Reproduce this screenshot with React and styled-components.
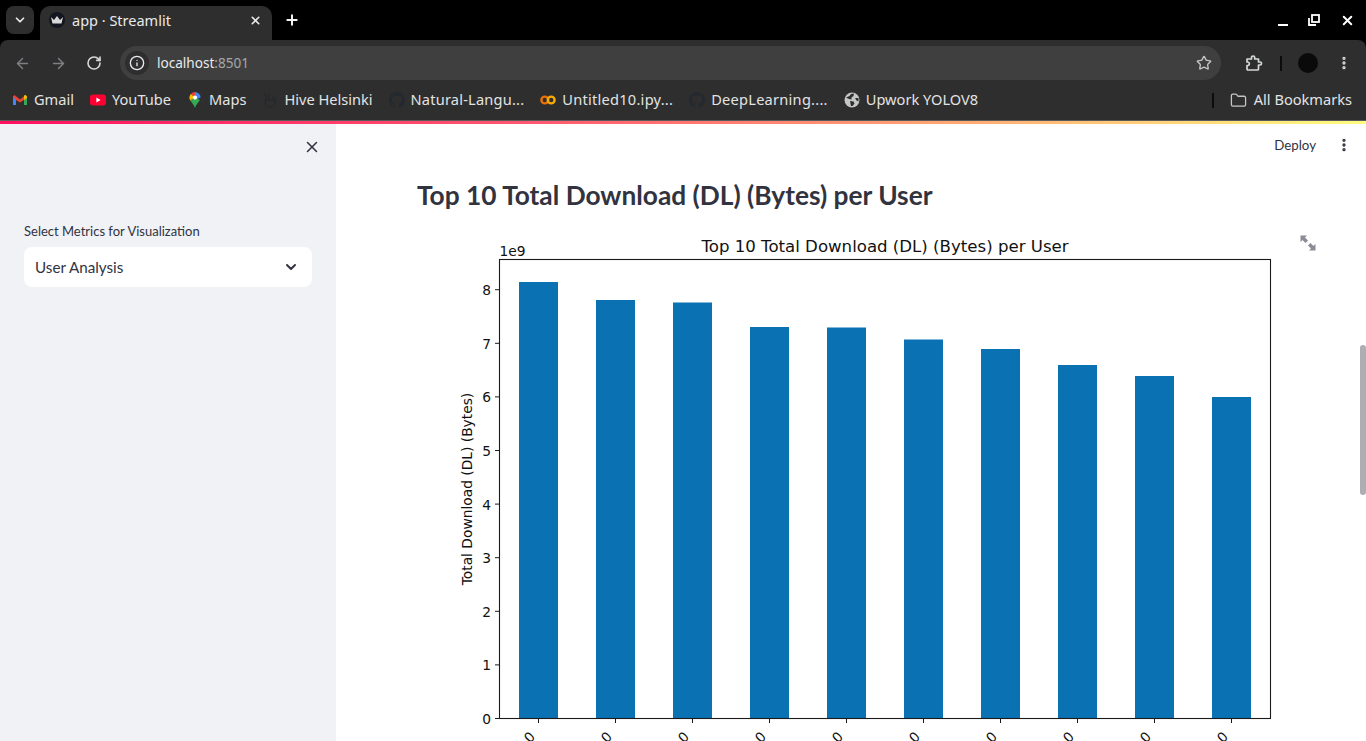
import React from "react";
import styled, { createGlobalStyle } from "styled-components";
import { ArrowLeft, ArrowRight, RotateCw, Info, Star, MoreVertical, Folder, X, Plus, ChevronDown } from "lucide-react";

const GlobalStyle = createGlobalStyle`
  html, body { margin: 0; padding: 0; height: 100%; overflow: hidden; background: #000; }
  #root { height: 741px; }
  * { box-sizing: border-box; }
`;

const bars = [
  { x: 519, top: 282 },
  { x: 596, top: 300 },
  { x: 673, top: 302.5 },
  { x: 750, top: 327 },
  { x: 827, top: 327.5 },
  { x: 904, top: 339.5 },
  { x: 981, top: 349 },
  { x: 1058, top: 365 },
  { x: 1135, top: 376 },
  { x: 1212, top: 397 },
];
const ids = ["33614892860.0", "33760536639.0", "33625779332.0", "33675877202.0", "33626320676.0", "33659725664.0", "33786323068.0", "33667163239.0", "33603127838.0", "33627080969.0"];
const yTicks = [0, 1, 2, 3, 4, 5, 6, 7, 8];

// chart svg starts at page x=417, y=232
const ox = 417;
const oy = 232;

const GmailIcon = () => (
  <svg width="16" height="16" viewBox="0 0 16 16">
    <path d="M1 4v9h3V7z" fill="#4285f4" />
    <path d="M15 4v9h-3V7z" fill="#34a853" />
    <path d="M1 4.5 L2.5 3 L8 7.5 L13.5 3 L15 4.5 L12 8 L8 10.5 L4 8z" fill="#ea4335" />
    <path d="M12 3.6 L13.5 3 L15 4.5 L15 6 L12 8z" fill="#fbbc04" />
  </svg>
);

const YoutubeIcon = () => (
  <svg width="16" height="16" viewBox="0 0 16 16">
    <rect x="0" y="2.5" width="16" height="11" rx="3" fill="#ff0033" />
    <path d="M6.4 5.6 L10.6 8 L6.4 10.4z" fill="#fff" />
  </svg>
);

const MapsIcon = () => (
  <svg width="16" height="18" viewBox="0 0 16 18">
    <path d="M8 1a5.6 5.6 0 0 1 5.6 5.6L8 9z" fill="#4285f4" />
    <path d="M8 1a5.6 5.6 0 0 0-4.2 1.9L8 6.6z" fill="#ea4335" />
    <path d="M3.8 2.9A5.6 5.6 0 0 0 2.4 6.6c0 1 .3 1.9.8 2.8L8 6.6z" fill="#fbbc04" />
    <path d="M3.2 9.4C4.6 11.6 7 13.4 8 17c1-3.6 3.6-5.6 4.9-8L8 6.6z" fill="#34a853" />
    <circle cx="8" cy="6.6" r="2.1" fill="#fff" />
  </svg>
);

const GithubMark = () => (
  <svg width="16" height="16" viewBox="0 0 16 16">
    <path
      fill="#24292f"
      d="M8 0C3.58 0 0 3.58 0 8c0 3.54 2.29 6.53 5.47 7.59.4.07.55-.17.55-.38 0-.19-.01-.82-.01-1.49-2.01.37-2.53-.49-2.69-.94-.09-.23-.48-.94-.82-1.13-.28-.15-.68-.52-.01-.53.63-.01 1.08.58 1.23.82.72 1.21 1.87.87 2.33.66.07-.52.28-.87.51-1.07-1.78-.2-3.64-.89-3.64-3.95 0-.87.31-1.59.82-2.15-.08-.2-.36-1.02.08-2.12 0 0 .67-.21 2.2.82.64-.18 1.32-.27 2-.27s1.36.09 2 .27c1.53-1.04 2.2-.82 2.2-.82.44 1.1.16 1.92.08 2.12.51.56.82 1.27.82 2.15 0 3.07-1.87 3.75-3.65 3.95.29.25.54.73.54 1.48 0 1.07-.01 1.93-.01 2.2 0 .21.15.46.55.38A8.01 8.01 0 0 0 16 8c0-4.42-3.58-8-8-8z"
    />
  </svg>
);

const HiveMark = () => (
  <svg width="16" height="18" viewBox="0 0 16 18" fill="none" stroke="#26282b" strokeWidth="1.5" strokeLinecap="round">
    <path d="M3 2 L4.5 9 M6.5 3 L7 8 M11 5 L11 9 M13 7 C14 11 13 16 8 16 C4 16 3 13 3 10 L6 9 L10 9.5" />
  </svg>
);

const ColabIcon = () => (
  <svg width="16" height="16" viewBox="0 0 16 16" fill="none" strokeWidth="2.4">
    <circle cx="4.8" cy="8" r="3.4" stroke="#e8710a" />
    <circle cx="11.2" cy="8" r="3.4" stroke="#f9ab00" />
  </svg>
);

const GlobeIcon = () => (
  <svg width="16" height="16" viewBox="0 0 16 16">
    <circle cx="8" cy="8" r="7.5" fill="#c4c7c5" />
    <path d="M2 5.5 L5.5 4 L7 2 L10 1.5 L9.5 4 L7.5 5.5 L7.5 7.5 L5 7z M6 9 L9.5 9.5 L10.5 11.5 L8.5 14 L7 14 L6.5 11.5z M11 6 L14.5 6 L14.5 9.5 L12.5 8.5z" fill="#2e2e2e" />
  </svg>
);

const CrownIcon = () => (
  <svg width="14" height="12" viewBox="0 0 14 12">
    <path d="M1 3 L4 6 L7 2 L10 6 L13 3 L11.5 9.5 H2.5z" fill="#d8d8d8" />
  </svg>
);

const PuzzleIcon = () => (
  <svg width="18" height="18" viewBox="0 0 18 18" fill="none" stroke="#d6d8da" strokeWidth="1.7" strokeLinejoin="round">
    <path d="M2 5 H6.5 V3.6 A1.6 1.6 0 0 1 9.7 3.6 V5 H13.5 V8 H15 A1.5 1.5 0 0 1 15 11 H13.5 V15 Q13.5 16 12.5 16 H3 Q2 16 2 15 V11.5 H3 A1.8 1.8 0 0 0 3 8 H2z" />
  </svg>
);

const App = () => {
  return (
    <>
      <GlobalStyle />
      <Page>
        <TabStrip>
          <TabSearch>
            <ChevronDown size={14} strokeWidth={3} color="#e8eaed" />
          </TabSearch>
          <Tab>
            <Favicon>
              <CrownIcon />
            </Favicon>
            <TabTitle>app · Streamlit</TabTitle>
            <X size={13} strokeWidth={3} color="#e8eaed" />
          </Tab>
          <NewTab>
            <Plus size={16} strokeWidth={3} color="#f1f3f4" />
          </NewTab>
          <WindowControls>
            <MinimizeIcon />
            <RestoreIcon />
            <X size={15} strokeWidth={3.2} color="#fff" />
          </WindowControls>
        </TabStrip>

        <Toolbar>
          <NavRow>
            <NavButtons>
              <ArrowLeft size={17} color="#7e8083" strokeWidth={2} />
              <ArrowRight size={17} color="#7e8083" strokeWidth={2} />
              <RotateCw size={16} color="#d6d8da" strokeWidth={2.4} />
            </NavButtons>
            <Omnibox>
              <SiteChip>
                <Info size={16} color="#e8eaed" strokeWidth={2} />
              </SiteChip>
              <Url>
                localhost<UrlPort>:8501</UrlPort>
              </Url>
              <Star size={16} color="#c4c7c5" strokeWidth={2} />
            </Omnibox>
            <ExtensionButton>
              <PuzzleIcon />
            </ExtensionButton>
            <BarDivider />
            <Avatar />
            <MoreVertical size={16} color="#d6d8da" strokeWidth={3} />
          </NavRow>
          <BookmarkRow>
            <Bookmark>
              <GmailIcon />
              <BookmarkLabel>Gmail</BookmarkLabel>
            </Bookmark>
            <Bookmark>
              <YoutubeIcon />
              <BookmarkLabel>YouTube</BookmarkLabel>
            </Bookmark>
            <Bookmark>
              <MapsIcon />
              <BookmarkLabel>Maps</BookmarkLabel>
            </Bookmark>
            <Bookmark>
              <HiveMark />
              <BookmarkLabel>Hive Helsinki</BookmarkLabel>
            </Bookmark>
            <Bookmark>
              <GithubMark />
              <BookmarkLabel $spacing={0.2}>Natural-Langu...</BookmarkLabel>
            </Bookmark>
            <Bookmark>
              <ColabIcon />
              <BookmarkLabel $spacing={0.25}>Untitled10.ipy...</BookmarkLabel>
            </Bookmark>
            <Bookmark>
              <GithubMark />
              <BookmarkLabel $spacing={0.25}>DeepLearning....</BookmarkLabel>
            </Bookmark>
            <Bookmark>
              <GlobeIcon />
              <BookmarkLabel>Upwork YOLOV8</BookmarkLabel>
            </Bookmark>
            <BookmarkEnd>
              <BookmarkDivider />
              <AllBookmarks>
                <Folder size={17} color="#c4c7c5" strokeWidth={1.8} />
                <BookmarkLabel>All Bookmarks</BookmarkLabel>
              </AllBookmarks>
            </BookmarkEnd>
          </BookmarkRow>
        </Toolbar>

        <Decoration />

        <AppBody>
          <Sidebar>
            <SidebarClose>
              <X size={18} color="#31333f" strokeWidth={2} />
            </SidebarClose>
            <SelectLabel>Select Metrics for Visualization</SelectLabel>
            <SelectBox>
              User Analysis
              <ChevronDown size={16} color="#31333f" strokeWidth={3} />
            </SelectBox>
          </Sidebar>

          <Main>
            <AppHeader>
              <DeployLink>Deploy</DeployLink>
              <MoreVertical size={16} color="#31333f" strokeWidth={3} />
            </AppHeader>
            <Heading>Top 10 Total Download (DL) (Bytes) per User</Heading>
            <ChartWrap>
              <ExpandButton>
                <svg width="16" height="16" viewBox="0 0 16 16" fill="#8b8c94">
                  <path d="M0.5 0.5 H7 L5 2.5 L8 5.5 L5.5 8 L2.5 5 L0.5 7z" />
                  <path d="M15.5 15.5 H9 L11 13.5 L8 10.5 L10.5 8 L13.5 11 L15.5 9z" />
                </svg>
              </ExpandButton>
              <ChartSvg width="880" height={741 - oy} viewBox={`${ox} ${oy} 880 ${741 - oy}`}>
                <ChartTitle x="885" y="251.5" textAnchor="middle">
                  Top 10 Total Download (DL) (Bytes) per User
                </ChartTitle>
                <ChartText x="499.5" y="255.5">1e9</ChartText>
                {bars.map((b) => (
                  <rect key={b.x} x={b.x} y={b.top} width="39" height={718.5 - b.top} fill="#0a72b2" />
                ))}
                <rect x="499.5" y="259.5" width="771" height="459" fill="none" stroke="#1a1a1a" strokeWidth="1.1" />
                {yTicks.map((t) => {
                  const y = 718.5 - t * 53.6;
                  return (
                    <g key={t}>
                      <line x1="495" x2="499.5" y1={y} y2={y} stroke="#1a1a1a" strokeWidth="1" />
                      <ChartText x="491" y={y + 5.5} textAnchor="end">{t}</ChartText>
                    </g>
                  );
                })}
                {bars.map((b, i) => (
                  <g key={b.x}>
                    <line x1={b.x + 19.5} x2={b.x + 19.5} y1="718.5" y2="723" stroke="#1a1a1a" strokeWidth="1" />
                    <ChartText
                      x={b.x + 17}
                      y="737.5"
                      textAnchor="end"
                      transform={`rotate(-45 ${b.x + 17} 737.5)`}
                    >
                      {ids[i]}
                    </ChartText>
                  </g>
                ))}
                <ChartText
                  x="472"
                  y="489"
                  textAnchor="middle"
                  transform="rotate(-90 472 489)"
                >
                  Total Download (DL) (Bytes)
                </ChartText>
              </ChartSvg>
            </ChartWrap>
            <ScrollThumb />
          </Main>
        </AppBody>
      </Page>
    </>
  );
};

export default App;

const MinimizeIcon = () => <MinimizeBar />;

const RestoreIcon = () => (
  <svg width="12" height="12" viewBox="0 0 12 12" fill="none" stroke="#fff" strokeWidth="1.8">
    <rect x="4" y="1" width="7" height="7" />
    <path d="M1 4v7h7" />
  </svg>
);

const Page = styled.div`
  width: 1366px;
  height: 741px;
  display: flex;
  flex-direction: column;
  overflow: hidden;
  background: #000;
  font-family: "Noto Sans", sans-serif;
`;

const TabStrip = styled.div`
  height: 40px;
  display: flex;
  align-items: flex-end;
  padding-left: 6px;
  background: #000;
  flex-shrink: 0;
`;

const TabSearch = styled.div`
  width: 28px;
  height: 28px;
  margin-bottom: 6px;
  border-radius: 8px;
  background: #2e2e2e;
  display: flex;
  align-items: center;
  justify-content: center;
`;

const Tab = styled.div`
  width: 232px;
  height: 34px;
  margin-left: 6px;
  padding: 0 10px 6px 9px;
  border-radius: 10px 10px 0 0;
  background: #2e2e2e;
  display: flex;
  align-items: center;
  color: #e8eaed;
`;

const Favicon = styled.div`
  width: 16px;
  height: 16px;
  border-radius: 50%;
  background: #14161f;
  display: flex;
  align-items: center;
  justify-content: center;
`;

const TabTitle = styled.span`
  flex: 1;
  margin-left: 7px;
  font-size: 14.5px;
  color: #e8eaed;
`;

const NewTab = styled.div`
  width: 28px;
  height: 28px;
  margin: 0 0 6px 6px;
  display: flex;
  align-items: center;
  justify-content: center;
`;

const WindowControls = styled.div`
  margin-left: auto;
  width: 88px;
  height: 40px;
  display: flex;
  align-items: center;
  justify-content: space-between;
  padding: 0 11px 0 0;
`;

const MinimizeBar = styled.div`
  width: 10px;
  height: 2px;
  margin-top: 9px;
  background: #fff;
`;

const Toolbar = styled.div`
  height: 81px;
  flex-shrink: 0;
  background: #2e2e2e;
  border-radius: 8px 8px 0 0;
  border-bottom: 1px solid #5a5a5a;
  display: flex;
  flex-direction: column;
`;

const NavRow = styled.div`
  height: 40px;
  padding: 6px 14px 0 14px;
  display: flex;
  align-items: center;
`;

const NavButtons = styled.div`
  width: 106px;
  display: flex;
  align-items: center;
  gap: 19px;
`;

const Omnibox = styled.div`
  width: 1102px;
  height: 34px;
  border-radius: 17px;
  background: #3f3f3f;
  display: flex;
  align-items: center;
  padding: 0 9px 0 5px;
`;

const SiteChip = styled.div`
  width: 24px;
  height: 24px;
  border-radius: 50%;
  background: #2e2e2e;
  display: flex;
  align-items: center;
  justify-content: center;
`;

const Url = styled.span`
  flex: 1;
  margin: -2px 0 0 8px;
  font-size: 13.6px;
  color: #e8eaed;
`;

const UrlPort = styled.span`
  color: #a5a7a9;
`;

const ExtensionButton = styled.div`
  margin-left: 24px;
  width: 18px;
  display: flex;
`;

const BarDivider = styled.div`
  width: 2px;
  height: 15px;
  margin-left: 17px;
  background: #0c0c0c;
`;

const Avatar = styled.div`
  width: 20px;
  height: 20px;
  margin: 0 18px 0 16px;
  border-radius: 50%;
  background: #0a0a0a;
`;

const BookmarkRow = styled.div`
  height: 40px;
  padding-left: 12px;
  display: flex;
  align-items: center;
  gap: 16px;
`;

const Bookmark = styled.div`
  display: flex;
  align-items: center;
  gap: 6px;
  font-size: 14.6px;
  color: #e3e3e3;
  white-space: nowrap;
`;

const BookmarkLabel = styled.span`
  margin-top: -2px;
  letter-spacing: ${(p) => p.$spacing || 0}px;
`;

const BookmarkEnd = styled.div`
  margin-left: auto;
  padding-right: 14px;
  display: flex;
  align-items: center;
  gap: 16px;
`;

const BookmarkDivider = styled.div`
  width: 2px;
  height: 15px;
  background: #0c0c0c;
`;

const AllBookmarks = styled(Bookmark)`
  gap: 7px;
`;

const Decoration = styled.div`
  height: 3px;
  flex-shrink: 0;
  background: linear-gradient(90deg, #ff0f5f 0%, #ff5a70 40%, #ffa873 70%, #fffd80 100%);
`;

const AppBody = styled.div`
  flex: 1;
  min-height: 0;
  display: flex;
  background: #fff;
  font-family: Lato, "Noto Sans", sans-serif;
  color: #31333f;
`;

const Sidebar = styled.aside`
  width: 336px;
  flex-shrink: 0;
  background: #f0f2f6;
  padding: 0 24px;
`;

const SidebarClose = styled.div`
  height: 47px;
  padding-top: 14px;
  display: flex;
  justify-content: flex-end;
  margin-right: -9px;
`;

const SelectLabel = styled.div`
  margin-top: 50px;
  font-size: 13px;
  line-height: 20px;
`;

const SelectBox = styled.div`
  margin-top: 6px;
  height: 40px;
  padding: 0 13px 0 11px;
  border-radius: 8px;
  background: #fff;
  font-size: 15.2px;
  display: flex;
  align-items: center;
  justify-content: space-between;
`;

const Main = styled.main`
  position: relative;
  flex: 1;
  min-width: 0;
  padding-left: 81px;
  overflow: hidden;
`;

const AppHeader = styled.div`
  height: 42px;
  padding-right: 14px;
  display: flex;
  align-items: center;
  justify-content: flex-end;
  gap: 20px;
`;

const DeployLink = styled.span`
  font-size: 13.3px;
  color: #31333f;
`;

const Heading = styled.h1`
  margin: 0;
  height: 66px;
  padding-top: 11px;
  font-size: 26.3px;
  line-height: 36px;
  font-weight: 700;
  color: #31333f;
`;

const ChartWrap = styled.div`
  position: relative;
`;

const ChartSvg = styled.svg`
  display: block;
`;

const ChartText = styled.text`
  font-family: "DejaVu Sans", sans-serif;
  font-size: 13.8px;
  fill: #111;
`;

const ChartTitle = styled(ChartText)`
  font-size: 16.6px;
`;

const ExpandButton = styled.div`
  position: absolute;
  top: 3px;
  left: 883px;
  width: 16px;
  height: 16px;
`;

const ScrollThumb = styled.div`
  position: absolute;
  top: 221px;
  right: 0;
  width: 6px;
  height: 150px;
  border-radius: 3px;
  background: #adadb2;
`;
